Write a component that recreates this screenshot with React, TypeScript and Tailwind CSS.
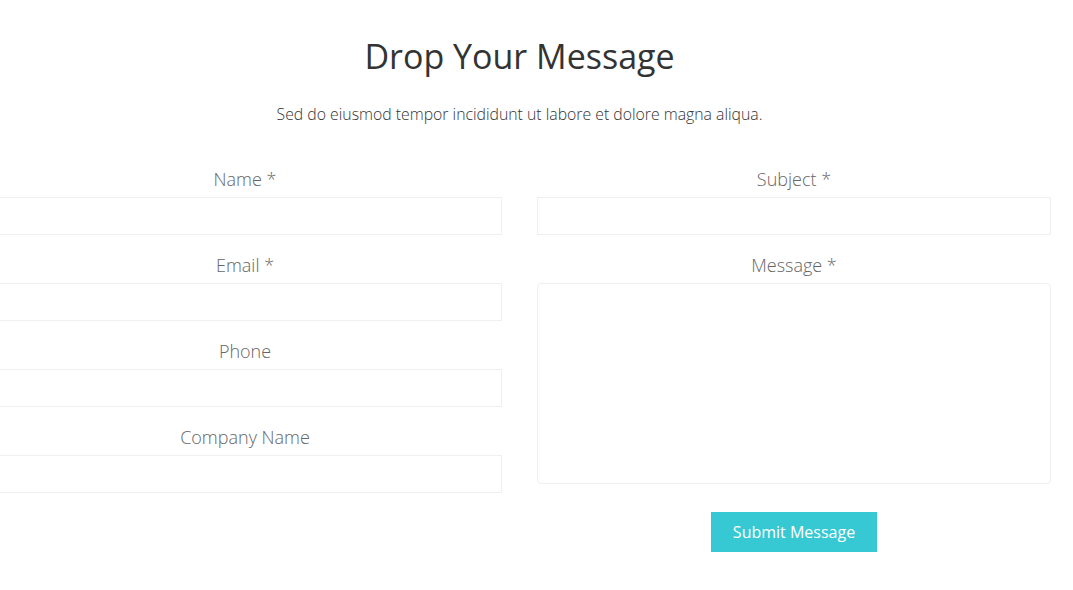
import React from "react";

const font = { fontFamily: '"Open Sans", "Liberation Sans", sans-serif' };

function Field({ label }: { label: string }) {
  return (
    <div className="flex flex-col mb-[18px]">
      <label className="h-[24px] leading-[24px] text-center text-[18px] font-light text-[#666666] mb-[6px]">
        {label}
      </label>
      <input className="h-[38px] w-full border border-[#efefef] bg-white outline-none" />
    </div>
  );
}

export default function App() {
  return (
    <div className="min-h-[590px] w-[1073px] overflow-hidden bg-white" style={font}>
      <div className="ml-[-12px] w-[1063px] pt-[34px]">
        <h2 className="text-center text-[34px] leading-[44px] font-normal text-[#333]">
          Drop Your Message
        </h2>
        <p className="mt-[24px] text-center text-[15.8px] leading-[24px] font-light text-[#333]">
          Sed do eiusmod tempor incididunt ut labore et dolore magna aliqua.
        </p>
        <div className="mt-[41px] grid grid-cols-2 gap-x-[35px]">
          <div className="flex flex-col">
            <Field label="Name *" />
            <Field label="Email *" />
            <Field label="Phone" />
            <Field label="Company Name" />
          </div>
          <div className="flex flex-col">
            <Field label="Subject *" />
            <div className="flex flex-col">
              <label className="h-[24px] leading-[24px] text-center text-[18px] font-light text-[#666666] mb-[6px]">
                Message *
              </label>
              <textarea className="h-[201px] w-full resize-none rounded-[4px] border border-[#efefef] bg-white outline-none" />
            </div>
            <div className="mt-[28px] flex justify-center">
              <button className="h-[40px] w-[166px] bg-[#36c9d3] text-[16px] font-normal text-white">
                Submit Message
              </button>
            </div>
          </div>
        </div>
      </div>
    </div>
  );
}
